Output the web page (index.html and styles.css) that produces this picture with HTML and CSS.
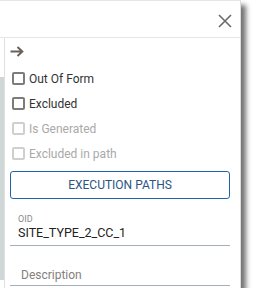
FILE: index.html
```html
<!DOCTYPE html>
<html lang="en">
<head>
    <meta charset="UTF-8">
    <meta name="viewport" content="width=device-width, initial-scale=1.0">
    <title>Properties</title>
    <link rel="stylesheet" href="styles.css">
</head>
<body>

    <div class="panel">
        <!-- header with close button -->
        <div class="panel-header">
            <svg class="close-icon" width="14" height="14" viewBox="0 0 14 14">
                <path d="M1 1 L13 13 M13 1 L1 13" stroke="#6a6a6a" stroke-width="1.6" fill="none"/>
            </svg>
        </div>

        <div class="panel-body">
            <div class="rail"><div class="rail-fill"></div></div>

            <div class="content">
                <div class="arrow-row">
                    <svg width="14" height="11" viewBox="0 0 14 11">
                        <path d="M0.5 5.5 H12.5 M7.5 1 L12.3 5.5 L7.5 10" stroke="#6b615c" stroke-width="2" fill="none"/>
                    </svg>
                </div>

                <label class="check-row"><span class="box"></span>Out Of Form</label>
                <label class="check-row"><span class="box"></span>Excluded</label>
                <label class="check-row disabled"><span class="box"></span>Is Generated</label>
                <label class="check-row disabled"><span class="box"></span>Excluded in path</label>

                <button class="paths-btn">EXECUTION PATHS</button>

                <div class="field">
                    <div class="field-label">OID</div>
                    <div class="field-value">SITE_TYPE_2_CC_1</div>
                </div>

                <div class="field field-empty">
                    <div class="placeholder">Description</div>
                </div>
            </div>
        </div>
    </div>

</body>
</html>
```

FILE: styles.css
```css
body {
    margin: 0;
    background: #fff;
    font-family: Roboto, Arial, sans-serif;
    color: #333;
}
.panel {
    width: 241px;
    height: 288px;
    box-sizing: border-box;
    border-top: 1px solid #e6e6e6;
    border-right: 1px solid #dcdcdc;
    background: #fff;
    box-shadow: 5px 5px 5px rgba(0, 0, 0, 0.55);
}
.panel-header {
    height: 36px;
    border-bottom: 1px solid #e6e6e6;
    display: flex;
    justify-content: flex-end;
    align-items: center;
    padding-right: 8px;
}
.close-icon {
    margin-top: 3px;
}
.panel-body {
    display: flex;
    height: 250px;
}
.rail {
    width: 4px;
    border-right: 1px solid #e0e0e0;
}
.rail-fill {
    margin-top: 39px;
    height: 203px;
    background: #cfd6d6;
}
.content {
    flex: 1;
    padding: 0 10px 0 5px;
}
.arrow-row {
    height: 11px;
    margin-top: 8px;
    margin-bottom: 9px;
}
.arrow-row svg {
    display: block;
}
.check-row {
    display: flex;
    align-items: center;
    height: 25px;
    font-size: 12px;
    color: #333;
}
.box {
    width: 13px;
    height: 13px;
    box-sizing: border-box;
    border: 2px solid #7c7c7c;
    border-radius: 2px;
    margin-left: 2px;
    margin-right: 4px;
}
.check-row.disabled {
    color: #a9a9a9;
}
.check-row.disabled .box {
    border-color: #cfcfcf;
}
.paths-btn {
    display: block;
    width: 100%;
    height: 28px;
    margin-top: 5px;
    border: 1px solid #2163ab;
    border-radius: 3px;
    background: #fff;
    color: #2a5584;
    font-family: Roboto, Arial, sans-serif;
    font-size: 12px;
}
.field {
    border-bottom: 1px solid #a4aebb;
    padding: 15px 0 5px 8px;
}
.field-label {
    font-size: 9px;
    line-height: 11px;
    color: #8a8a8a;
}
.field-value {
    font-size: 12.5px;
    line-height: 15px;
    color: #222;
}
.field-empty {
    padding: 22px 0 3px 11px;
}
.placeholder {
    font-size: 12px;
    line-height: 14px;
    color: #85807c;
}
```
